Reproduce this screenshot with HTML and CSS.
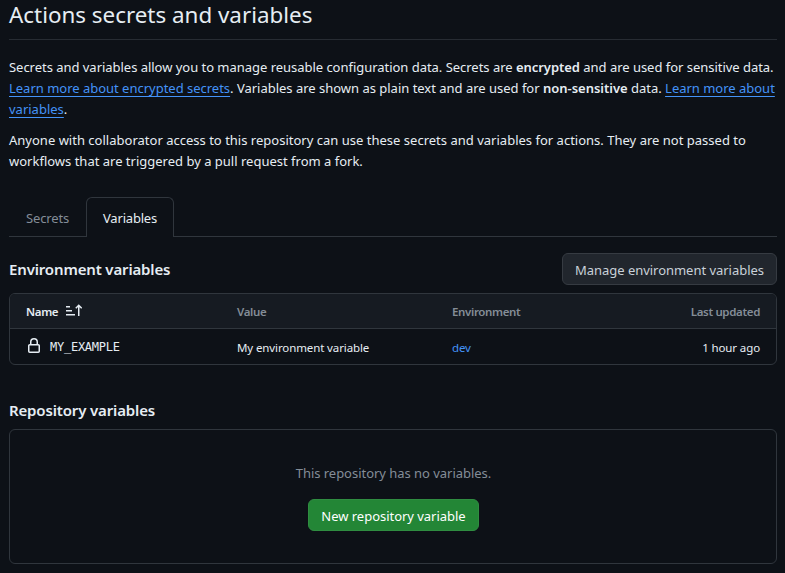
FILE: index.html
```html
<!DOCTYPE html>
<html lang="en">
<head>
<meta charset="utf-8">
<title>Actions secrets and variables</title>
<link rel="stylesheet" href="styles.css">
</head>
<body>
<main class="page">
  <h1 class="title">Actions secrets and variables</h1>
  <p class="intro"><span class="snug">Secrets and variables allow you to manage reusable configuration data. Secrets are <b>encrypted</b> and are used for sensitive data.</span><br><span class="close"><a href="#">Learn more about encrypted secrets</a>. Variables are shown as plain text and are used for <b>non-sensitive</b> data. <a href="#">Learn more about</a></span><br><a href="#">variables</a>.</p>
  <p class="intro"><span class="loose">Anyone with collaborator access to this repository can use these secrets and variables for actions. They are not passed to</span><br>workflows that are triggered by a pull request from a fork.</p>
  <nav class="tabs">
    <a class="tab" href="#">Secrets</a>
    <a class="tab selected" href="#">Variables</a>
  </nav>
  <div class="section-head">
    <h2>Environment variables</h2>
    <button class="btn">Manage environment variables</button>
  </div>
  <div class="table">
    <div class="row head">
      <span class="name">Name
        <svg class="sort" viewBox="0 0 16 16" width="16" height="16"><path d="M0 3h4v1.5H0zM0 7h6v1.5H0zM0 11h9v1.5H0z"/><path d="M12.75 2.5V13M9.8 5.2l2.95-2.9 2.95 2.9" fill="none" stroke="currentColor" stroke-width="1.5"/></svg>
      </span>
      <span>Value</span><span>Environment</span><span class="end">Last updated</span>
    </div>
    <div class="row body-row">
      <span class="name"><svg class="lock" viewBox="0 0 16 16" width="16" height="16"><path d="M4 4a4 4 0 0 1 8 0v2h.25c.966 0 1.75.784 1.75 1.75v5.5A1.75 1.75 0 0 1 12.25 15h-8.5A1.75 1.75 0 0 1 2 13.25v-5.5C2 6.784 2.784 6 3.75 6H4Zm8.25 3.5h-8.5a.25.25 0 0 0-.25.25v5.5c0 .138.112.25.25.25h8.5a.25.25 0 0 0 .25-.25v-5.5a.25.25 0 0 0-.25-.25ZM10.5 6V4a2.5 2.5 0 1 0-5 0v2Z"/></svg><code>MY_EXAMPLE</code></span>
      <span>My environment variable</span><a href="#">dev</a><span class="end">1 hour ago</span>
    </div>
  </div>
  <h2 class="repo-title">Repository variables</h2>
  <div class="blank">
    <p>This repository has no variables.</p>
    <button class="btn primary">New repository variable</button>
  </div>
</main>
</body>
</html>
```
FILE: styles.css
```css
* { box-sizing: border-box; }
body {
  margin: 0;
  background: #0d1117;
  color: #e6edf3;
  font: 14px/21px "Noto Sans", sans-serif;
  overflow: hidden;
}
.page { padding: 0 8px 0 9px; }
.title {
  height: 40px;
  margin: 0 0 17px;
  border-bottom: 1px solid #272c33;
  font-size: 22.4px;
  font-weight: 400;
  line-height: 29px;
}
.intro { margin: 0 0 10px; font-size: 13px; white-space: nowrap; }
.snug { letter-spacing: -.03px; }
.close { letter-spacing: -.012px; }
.loose { letter-spacing: .009px; }
b { font-weight: 600; }
a { color: #4493f8; }
.intro a { text-underline-offset: 3px; }
.tabs {
  display: flex;
  height: 40px;
  margin-top: 25px;
  border-bottom: 1px solid #30363d;
}
.tab {
  height: 40px;
  padding: 0 16px;
  border: 1px solid transparent;
  border-bottom: 0;
  color: #848d97;
  font-size: 13px;
  line-height: 40px;
  letter-spacing: -.15px;
  text-decoration: none;
}
.tab.selected {
  border-color: #30363d;
  border-radius: 6px 6px 0 0;
  background: #0d1117;
  color: #e6edf3;
  letter-spacing: -.2px;
}
.section-head {
  display: flex;
  justify-content: space-between;
  align-items: center;
  height: 32px;
  margin: 16px 0 8px;
}
h2 {
  margin: 0;
  font-size: 15px;
  line-height: 22px;
  font-weight: 600;
  letter-spacing: -.15px;
}
.btn {
  height: 32px;
  padding: 1px 12px 0;
  border: 1px solid #363b42;
  border-radius: 6px;
  background: #21262d;
  color: #c9d1d9;
  font: 400 13px/20px "Noto Sans", sans-serif;
  letter-spacing: -.03px;
  white-space: nowrap;
}
.table {
  height: 72px;
  border: 1px solid #30363d;
  border-radius: 6px;
  overflow: hidden;
  font-size: 11.5px;
}
.row {
  display: grid;
  grid-template-columns: 211px 215px 1fr 120px;
  align-items: center;
  height: 35px;
  padding: 0 16px;
}
.row a { text-decoration: none; }
.head {
  height: 35px;
  padding-top: 1px;
  border-bottom: 1px solid #30363d;
  background: #161b22;
  color: #848d97;
  font-weight: 600;
  letter-spacing: -.35px;
}
.body-row { padding-top: 2px; letter-spacing: -.11px; }
.name { display: flex; align-items: center; color: #e6edf3; }
.end { text-align: right; }
svg { fill: currentColor; flex: none; }
.sort { margin: -2px 0 0 8px; }
.lock { margin: -3px 8px 0 0; }
code {
  margin-top: -2px;
  font: 12px/20px "DejaVu Sans Mono", monospace;
  letter-spacing: -.25px;
}
.repo-title { margin: 34px 0 8px; }
.blank {
  display: flex;
  flex-direction: column;
  align-items: center;
  height: 135px;
  padding: 33px 0 0 1px;
  border: 1px solid #30363d;
  border-radius: 6px;
}
.blank p {
  margin: 0 0 15px;
  color: #848d97;
  font-size: 13px;
  letter-spacing: -.03px;
}
.primary {
  border-color: #2f8d41;
  background: #238636;
  color: #fff;
}
```
